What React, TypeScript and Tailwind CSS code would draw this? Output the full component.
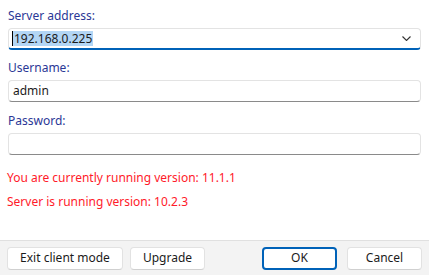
import React from 'react';

const font = { fontFamily: '"Noto Sans", "Open Sans", sans-serif' };

const App: React.FC = () => {
  return (
    <div
      className="w-[429px] h-[275px] flex flex-col bg-white text-[12px] text-[#1b1b1b] overflow-hidden"
      style={font}
    >
      <div className="flex flex-col px-2 pt-2">
        <label className="h-4 leading-4 text-[#2b3796]">Server address:</label>
        <div className="mt-1 h-[22px] flex items-center rounded-[4px] border border-[#e3e3e3] border-b-2 border-b-[#0062b8] bg-white pl-[3px] pr-[9px]">
          <span className="border-l border-black bg-[#b3d6f5] leading-[15px] px-[1px]">192.168.0.225</span>
          <div className="flex-1" />
          <svg width="9" height="5" viewBox="0 0 9 5" fill="none" stroke="#333" strokeWidth="1.1">
            <path d="M0.5 0.5l4 4 4-4" />
          </svg>
        </div>

        <label className="mt-[10px] h-4 leading-4 text-[#2b3796]">Username:</label>
        <div className="mt-1 h-[22px] flex items-center rounded-[4px] border border-[#e3e3e3] border-b-[#8a8a8a] bg-white px-[4px]">
          admin
        </div>

        <label className="mt-[11px] h-4 leading-4 text-[#2b3796]">Password:</label>
        <div className="mt-1 h-[22px] rounded-[4px] border border-[#e3e3e3] border-b-[#8a8a8a] bg-white" />

        <p className="mt-[15px] h-4 leading-4 text-[#ff1a2a] -ml-px">You are currently running version: 11.1.1</p>
        <p className="mt-2 h-4 leading-4 text-[#ff1a2a] -ml-px">Server is running version: 10.2.3</p>
      </div>

      <div className="mt-auto h-[35px] flex items-center border-t border-[#e0e0e0] bg-[#f3f3f3] px-[7px]">
        <button className="h-[23px] w-[116px] rounded-[4px] border border-[#e2e2e2] border-b-[#d0d0d0] bg-white">
          Exit client mode
        </button>
        <button className="ml-[7px] h-[23px] w-[75px] rounded-[4px] border border-[#e2e2e2] border-b-[#d0d0d0] bg-white">
          Upgrade
        </button>
        <div className="flex-1" />
        <button className="h-[23px] w-[75px] rounded-[4px] border-2 border-[#0062b8] bg-white">
          OK
        </button>
        <button className="ml-[10px] h-[23px] w-[75px] rounded-[4px] border border-[#e2e2e2] border-b-[#d0d0d0] bg-white">
          Cancel
        </button>
      </div>
    </div>
  );
};

export default App;
